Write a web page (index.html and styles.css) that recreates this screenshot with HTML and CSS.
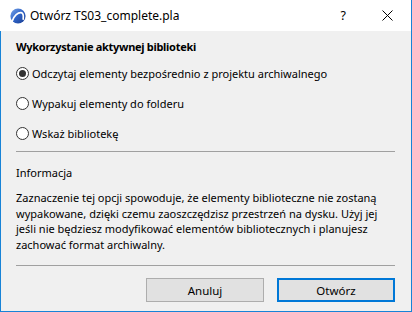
FILE: index.html
```html
<html>
<head>
<meta charset="utf-8">
<link rel="stylesheet" href="styles.css">
</head>
<body>
<div class="window">
  <div class="titlebar">
    <svg class="appicon" width="16" height="16" viewBox="0 0 16 16">
      <defs>
        <linearGradient id="logo" x1="0" y1="0" x2="1" y2="1">
          <stop offset="0" stop-color="#7aa6ea"/>
          <stop offset="0.5" stop-color="#2f63c6"/>
          <stop offset="1" stop-color="#1a3c8f"/>
        </linearGradient>
      </defs>
      <circle cx="8" cy="8" r="7.6" fill="url(#logo)"/>
      <path d="M2.2 13.2 C4 7.5 8 4.2 11.2 4.6 C13.2 5 13.6 7.6 13.2 11.2" fill="none" stroke="#ffffff" stroke-width="1.7" stroke-linecap="round"/>
    </svg>
    <span class="title">Otwórz TS03_complete.pla</span>
    <span class="help">?</span>
    <svg class="close" width="11" height="11" viewBox="0 0 11 11">
      <path d="M0.5 0.5 L10.5 10.5 M10.5 0.5 L0.5 10.5" stroke="#000000" stroke-width="1"/>
    </svg>
  </div>
  <div class="content">
    <div class="heading">Wykorzystanie aktywnej biblioteki</div>
    <ul class="options">
      <li class="option"><span class="radio checked"></span>Odczytaj elementy bezpośrednio z projektu archiwalnego</li>
      <li class="option"><span class="radio"></span>Wypakuj elementy do folderu</li>
      <li class="option"><span class="radio"></span>Wskaż bibliotekę</li>
    </ul>
    <div class="separator"></div>
    <div class="infoLabel">Informacja</div>
    <p class="infoText">Zaznaczenie tej opcji spowoduje, że elementy biblioteczne nie zostaną wypakowane, dzięki czemu zaoszczędzisz przestrzeń na dysku. Użyj jej jeśli nie będziesz modyfikować elementów bibliotecznych i planujesz zachować format archiwalny.</p>
    <div class="separator lower"></div>
    <div class="buttons">
      <button class="btn">Anuluj</button>
      <button class="btn default">Otwórz</button>
    </div>
  </div>
</div>
</body>
</html>
```

FILE: styles.css
```css
html, body {
    margin: 0;
    padding: 0;
}
body {
    font-family: "Noto Sans", "DejaVu Sans", sans-serif;
    font-size: 11px;
    color: #000000;
}
.window {
    width: 412px;
    height: 312px;
    box-sizing: border-box;
    background-color: #f0f0f0;
    border: 1px solid #1883d7;
    border-top: 0;
    display: flex;
    flex-direction: column;
}
.titlebar {
    height: 31px;
    flex: none;
    background-color: #ffffff;
    display: flex;
    align-items: center;
    padding-left: 10px;
    margin-left: -1px;
}
.appicon {
    flex: none;
    margin-top: 1px;
}
.title {
    margin-left: 4px;
    font-size: 12px;
    flex: 1;
}
.help {
    font-size: 12.5px;
    margin-right: 36px;
}
.close {
    margin-right: 18px;
}
.content {
    padding: 0 15px;
    flex: 1;
}
.heading {
    font-weight: bold;
    letter-spacing: -0.3px;
    margin-top: 8px;
    line-height: 16px;
}
ul.options {
    list-style: none;
    margin: 0;
    padding: 0;
}
.option {
    display: flex;
    align-items: center;
    height: 30px;
}
.options .option:first-child {
    margin-top: 3px;
}
.radio {
    width: 13px;
    height: 13px;
    box-sizing: border-box;
    border: 1px solid #333333;
    border-radius: 50%;
    background-color: #ffffff;
    margin-right: 3px;
    display: flex;
    align-items: center;
    justify-content: center;
}
.radio.checked:after {
    content: '';
    width: 7px;
    height: 7px;
    border-radius: 50%;
    background-color: #333333;
}
.separator {
    height: 1px;
    background-color: #a0a0a0;
    margin-top: 3px;
    margin-right: 1px;
}
.infoLabel {
    margin-top: 13px;
    line-height: 16px;
}
.infoText {
    margin: 9px 0 0 0;
    line-height: 15.6px;
}
.separator.lower {
    margin-top: 13px;
}
.buttons {
    display: flex;
    justify-content: flex-end;
    gap: 13px;
    margin-top: 12px;
    margin-right: 1px;
}
.btn {
    width: 118px;
    height: 24px;
    box-sizing: border-box;
    font-family: inherit;
    font-size: 11.5px;
    background-color: #e1e1e1;
    border: 1px solid #adadad;
    color: #000000;
    padding: 0;
}
.btn.default {
    border: 2px solid #0078d7;
}
```
